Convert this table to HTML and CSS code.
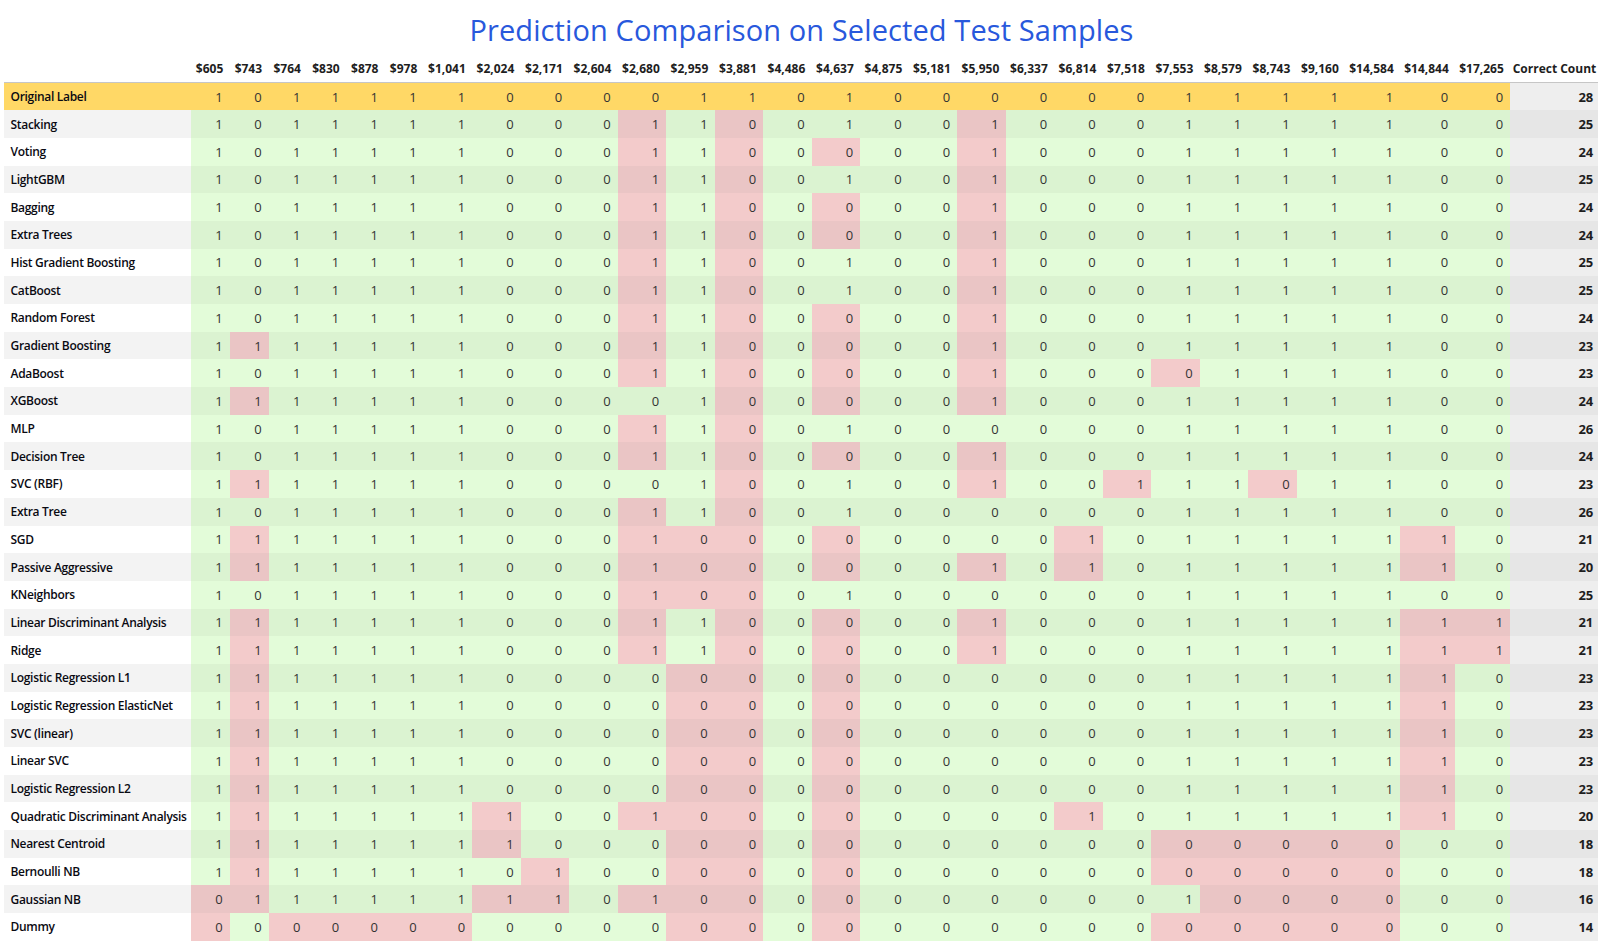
FILE: index.html
```html
<!DOCTYPE html>
<html lang="en">
<head>
<meta charset="utf-8">
<title>Prediction Comparison on Selected Test Samples</title>
<link rel="stylesheet" href="styles.css">
</head>
<body>
<div class="page">
<h1 class="title">Prediction Comparison on Selected Test Samples</h1>
<table class="grid">
<colgroup>
<col class="c-lbl">
<col class="c-s"><col class="c-s"><col class="c-s"><col class="c-s"><col class="c-s"><col class="c-s">
<col class="c-m"><col class="c-m"><col class="c-m"><col class="c-m"><col class="c-m"><col class="c-m"><col class="c-m"><col class="c-m"><col class="c-m"><col class="c-m"><col class="c-m"><col class="c-m"><col class="c-m"><col class="c-m"><col class="c-m"><col class="c-m"><col class="c-m"><col class="c-m"><col class="c-m">
<col class="c-l"><col class="c-l"><col class="c-l">
<col class="c-cnt">
</colgroup>
<thead>
<tr><th></th><th>$605</th><th>$743</th><th>$764</th><th>$830</th><th>$878</th><th>$978</th><th>$1,041</th><th>$2,024</th><th>$2,171</th><th>$2,604</th><th>$2,680</th><th>$2,959</th><th>$3,881</th><th>$4,486</th><th>$4,637</th><th>$4,875</th><th>$5,181</th><th>$5,950</th><th>$6,337</th><th>$6,814</th><th>$7,518</th><th>$7,553</th><th>$8,579</th><th>$8,743</th><th>$9,160</th><th>$14,584</th><th>$14,844</th><th>$17,265</th><th class="h-cnt">Correct Count</th></tr>
</thead>
<tbody>
<tr class="orig"><td class="lbl">Original Label</td><td>1</td><td>0</td><td>1</td><td>1</td><td>1</td><td>1</td><td>1</td><td>0</td><td>0</td><td>0</td><td>0</td><td>1</td><td>1</td><td>0</td><td>1</td><td>0</td><td>0</td><td>0</td><td>0</td><td>0</td><td>0</td><td>1</td><td>1</td><td>1</td><td>1</td><td>1</td><td>0</td><td>0</td><td class="cnt">28</td></tr>
<tr><td class="lbl">Stacking</td><td>1</td><td>0</td><td>1</td><td>1</td><td>1</td><td>1</td><td>1</td><td>0</td><td>0</td><td>0</td><td class="x">1</td><td>1</td><td class="x">0</td><td>0</td><td>1</td><td>0</td><td>0</td><td class="x">1</td><td>0</td><td>0</td><td>0</td><td>1</td><td>1</td><td>1</td><td>1</td><td>1</td><td>0</td><td>0</td><td class="cnt">25</td></tr>
<tr><td class="lbl">Voting</td><td>1</td><td>0</td><td>1</td><td>1</td><td>1</td><td>1</td><td>1</td><td>0</td><td>0</td><td>0</td><td class="x">1</td><td>1</td><td class="x">0</td><td>0</td><td class="x">0</td><td>0</td><td>0</td><td class="x">1</td><td>0</td><td>0</td><td>0</td><td>1</td><td>1</td><td>1</td><td>1</td><td>1</td><td>0</td><td>0</td><td class="cnt">24</td></tr>
<tr><td class="lbl">LightGBM</td><td>1</td><td>0</td><td>1</td><td>1</td><td>1</td><td>1</td><td>1</td><td>0</td><td>0</td><td>0</td><td class="x">1</td><td>1</td><td class="x">0</td><td>0</td><td>1</td><td>0</td><td>0</td><td class="x">1</td><td>0</td><td>0</td><td>0</td><td>1</td><td>1</td><td>1</td><td>1</td><td>1</td><td>0</td><td>0</td><td class="cnt">25</td></tr>
<tr><td class="lbl">Bagging</td><td>1</td><td>0</td><td>1</td><td>1</td><td>1</td><td>1</td><td>1</td><td>0</td><td>0</td><td>0</td><td class="x">1</td><td>1</td><td class="x">0</td><td>0</td><td class="x">0</td><td>0</td><td>0</td><td class="x">1</td><td>0</td><td>0</td><td>0</td><td>1</td><td>1</td><td>1</td><td>1</td><td>1</td><td>0</td><td>0</td><td class="cnt">24</td></tr>
<tr><td class="lbl">Extra Trees</td><td>1</td><td>0</td><td>1</td><td>1</td><td>1</td><td>1</td><td>1</td><td>0</td><td>0</td><td>0</td><td class="x">1</td><td>1</td><td class="x">0</td><td>0</td><td class="x">0</td><td>0</td><td>0</td><td class="x">1</td><td>0</td><td>0</td><td>0</td><td>1</td><td>1</td><td>1</td><td>1</td><td>1</td><td>0</td><td>0</td><td class="cnt">24</td></tr>
<tr><td class="lbl">Hist Gradient Boosting</td><td>1</td><td>0</td><td>1</td><td>1</td><td>1</td><td>1</td><td>1</td><td>0</td><td>0</td><td>0</td><td class="x">1</td><td>1</td><td class="x">0</td><td>0</td><td>1</td><td>0</td><td>0</td><td class="x">1</td><td>0</td><td>0</td><td>0</td><td>1</td><td>1</td><td>1</td><td>1</td><td>1</td><td>0</td><td>0</td><td class="cnt">25</td></tr>
<tr><td class="lbl">CatBoost</td><td>1</td><td>0</td><td>1</td><td>1</td><td>1</td><td>1</td><td>1</td><td>0</td><td>0</td><td>0</td><td class="x">1</td><td>1</td><td class="x">0</td><td>0</td><td>1</td><td>0</td><td>0</td><td class="x">1</td><td>0</td><td>0</td><td>0</td><td>1</td><td>1</td><td>1</td><td>1</td><td>1</td><td>0</td><td>0</td><td class="cnt">25</td></tr>
<tr><td class="lbl">Random Forest</td><td>1</td><td>0</td><td>1</td><td>1</td><td>1</td><td>1</td><td>1</td><td>0</td><td>0</td><td>0</td><td class="x">1</td><td>1</td><td class="x">0</td><td>0</td><td class="x">0</td><td>0</td><td>0</td><td class="x">1</td><td>0</td><td>0</td><td>0</td><td>1</td><td>1</td><td>1</td><td>1</td><td>1</td><td>0</td><td>0</td><td class="cnt">24</td></tr>
<tr><td class="lbl">Gradient Boosting</td><td>1</td><td class="x">1</td><td>1</td><td>1</td><td>1</td><td>1</td><td>1</td><td>0</td><td>0</td><td>0</td><td class="x">1</td><td>1</td><td class="x">0</td><td>0</td><td class="x">0</td><td>0</td><td>0</td><td class="x">1</td><td>0</td><td>0</td><td>0</td><td>1</td><td>1</td><td>1</td><td>1</td><td>1</td><td>0</td><td>0</td><td class="cnt">23</td></tr>
<tr><td class="lbl">AdaBoost</td><td>1</td><td>0</td><td>1</td><td>1</td><td>1</td><td>1</td><td>1</td><td>0</td><td>0</td><td>0</td><td class="x">1</td><td>1</td><td class="x">0</td><td>0</td><td class="x">0</td><td>0</td><td>0</td><td class="x">1</td><td>0</td><td>0</td><td>0</td><td class="x">0</td><td>1</td><td>1</td><td>1</td><td>1</td><td>0</td><td>0</td><td class="cnt">23</td></tr>
<tr><td class="lbl">XGBoost</td><td>1</td><td class="x">1</td><td>1</td><td>1</td><td>1</td><td>1</td><td>1</td><td>0</td><td>0</td><td>0</td><td>0</td><td>1</td><td class="x">0</td><td>0</td><td class="x">0</td><td>0</td><td>0</td><td class="x">1</td><td>0</td><td>0</td><td>0</td><td>1</td><td>1</td><td>1</td><td>1</td><td>1</td><td>0</td><td>0</td><td class="cnt">24</td></tr>
<tr><td class="lbl">MLP</td><td>1</td><td>0</td><td>1</td><td>1</td><td>1</td><td>1</td><td>1</td><td>0</td><td>0</td><td>0</td><td class="x">1</td><td>1</td><td class="x">0</td><td>0</td><td>1</td><td>0</td><td>0</td><td>0</td><td>0</td><td>0</td><td>0</td><td>1</td><td>1</td><td>1</td><td>1</td><td>1</td><td>0</td><td>0</td><td class="cnt">26</td></tr>
<tr><td class="lbl">Decision Tree</td><td>1</td><td>0</td><td>1</td><td>1</td><td>1</td><td>1</td><td>1</td><td>0</td><td>0</td><td>0</td><td class="x">1</td><td>1</td><td class="x">0</td><td>0</td><td class="x">0</td><td>0</td><td>0</td><td class="x">1</td><td>0</td><td>0</td><td>0</td><td>1</td><td>1</td><td>1</td><td>1</td><td>1</td><td>0</td><td>0</td><td class="cnt">24</td></tr>
<tr><td class="lbl">SVC (RBF)</td><td>1</td><td class="x">1</td><td>1</td><td>1</td><td>1</td><td>1</td><td>1</td><td>0</td><td>0</td><td>0</td><td>0</td><td>1</td><td class="x">0</td><td>0</td><td>1</td><td>0</td><td>0</td><td class="x">1</td><td>0</td><td>0</td><td class="x">1</td><td>1</td><td>1</td><td class="x">0</td><td>1</td><td>1</td><td>0</td><td>0</td><td class="cnt">23</td></tr>
<tr><td class="lbl">Extra Tree</td><td>1</td><td>0</td><td>1</td><td>1</td><td>1</td><td>1</td><td>1</td><td>0</td><td>0</td><td>0</td><td class="x">1</td><td>1</td><td class="x">0</td><td>0</td><td>1</td><td>0</td><td>0</td><td>0</td><td>0</td><td>0</td><td>0</td><td>1</td><td>1</td><td>1</td><td>1</td><td>1</td><td>0</td><td>0</td><td class="cnt">26</td></tr>
<tr><td class="lbl">SGD</td><td>1</td><td class="x">1</td><td>1</td><td>1</td><td>1</td><td>1</td><td>1</td><td>0</td><td>0</td><td>0</td><td class="x">1</td><td class="x">0</td><td class="x">0</td><td>0</td><td class="x">0</td><td>0</td><td>0</td><td>0</td><td>0</td><td class="x">1</td><td>0</td><td>1</td><td>1</td><td>1</td><td>1</td><td>1</td><td class="x">1</td><td>0</td><td class="cnt">21</td></tr>
<tr><td class="lbl">Passive Aggressive</td><td>1</td><td class="x">1</td><td>1</td><td>1</td><td>1</td><td>1</td><td>1</td><td>0</td><td>0</td><td>0</td><td class="x">1</td><td class="x">0</td><td class="x">0</td><td>0</td><td class="x">0</td><td>0</td><td>0</td><td class="x">1</td><td>0</td><td class="x">1</td><td>0</td><td>1</td><td>1</td><td>1</td><td>1</td><td>1</td><td class="x">1</td><td>0</td><td class="cnt">20</td></tr>
<tr><td class="lbl">KNeighbors</td><td>1</td><td>0</td><td>1</td><td>1</td><td>1</td><td>1</td><td>1</td><td>0</td><td>0</td><td>0</td><td class="x">1</td><td class="x">0</td><td class="x">0</td><td>0</td><td>1</td><td>0</td><td>0</td><td>0</td><td>0</td><td>0</td><td>0</td><td>1</td><td>1</td><td>1</td><td>1</td><td>1</td><td>0</td><td>0</td><td class="cnt">25</td></tr>
<tr><td class="lbl">Linear Discriminant Analysis</td><td>1</td><td class="x">1</td><td>1</td><td>1</td><td>1</td><td>1</td><td>1</td><td>0</td><td>0</td><td>0</td><td class="x">1</td><td>1</td><td class="x">0</td><td>0</td><td class="x">0</td><td>0</td><td>0</td><td class="x">1</td><td>0</td><td>0</td><td>0</td><td>1</td><td>1</td><td>1</td><td>1</td><td>1</td><td class="x">1</td><td class="x">1</td><td class="cnt">21</td></tr>
<tr><td class="lbl">Ridge</td><td>1</td><td class="x">1</td><td>1</td><td>1</td><td>1</td><td>1</td><td>1</td><td>0</td><td>0</td><td>0</td><td class="x">1</td><td>1</td><td class="x">0</td><td>0</td><td class="x">0</td><td>0</td><td>0</td><td class="x">1</td><td>0</td><td>0</td><td>0</td><td>1</td><td>1</td><td>1</td><td>1</td><td>1</td><td class="x">1</td><td class="x">1</td><td class="cnt">21</td></tr>
<tr><td class="lbl">Logistic Regression L1</td><td>1</td><td class="x">1</td><td>1</td><td>1</td><td>1</td><td>1</td><td>1</td><td>0</td><td>0</td><td>0</td><td>0</td><td class="x">0</td><td class="x">0</td><td>0</td><td class="x">0</td><td>0</td><td>0</td><td>0</td><td>0</td><td>0</td><td>0</td><td>1</td><td>1</td><td>1</td><td>1</td><td>1</td><td class="x">1</td><td>0</td><td class="cnt">23</td></tr>
<tr><td class="lbl">Logistic Regression ElasticNet</td><td>1</td><td class="x">1</td><td>1</td><td>1</td><td>1</td><td>1</td><td>1</td><td>0</td><td>0</td><td>0</td><td>0</td><td class="x">0</td><td class="x">0</td><td>0</td><td class="x">0</td><td>0</td><td>0</td><td>0</td><td>0</td><td>0</td><td>0</td><td>1</td><td>1</td><td>1</td><td>1</td><td>1</td><td class="x">1</td><td>0</td><td class="cnt">23</td></tr>
<tr><td class="lbl">SVC (linear)</td><td>1</td><td class="x">1</td><td>1</td><td>1</td><td>1</td><td>1</td><td>1</td><td>0</td><td>0</td><td>0</td><td>0</td><td class="x">0</td><td class="x">0</td><td>0</td><td class="x">0</td><td>0</td><td>0</td><td>0</td><td>0</td><td>0</td><td>0</td><td>1</td><td>1</td><td>1</td><td>1</td><td>1</td><td class="x">1</td><td>0</td><td class="cnt">23</td></tr>
<tr><td class="lbl">Linear SVC</td><td>1</td><td class="x">1</td><td>1</td><td>1</td><td>1</td><td>1</td><td>1</td><td>0</td><td>0</td><td>0</td><td>0</td><td class="x">0</td><td class="x">0</td><td>0</td><td class="x">0</td><td>0</td><td>0</td><td>0</td><td>0</td><td>0</td><td>0</td><td>1</td><td>1</td><td>1</td><td>1</td><td>1</td><td class="x">1</td><td>0</td><td class="cnt">23</td></tr>
<tr><td class="lbl">Logistic Regression L2</td><td>1</td><td class="x">1</td><td>1</td><td>1</td><td>1</td><td>1</td><td>1</td><td>0</td><td>0</td><td>0</td><td>0</td><td class="x">0</td><td class="x">0</td><td>0</td><td class="x">0</td><td>0</td><td>0</td><td>0</td><td>0</td><td>0</td><td>0</td><td>1</td><td>1</td><td>1</td><td>1</td><td>1</td><td class="x">1</td><td>0</td><td class="cnt">23</td></tr>
<tr><td class="lbl">Quadratic Discriminant Analysis</td><td>1</td><td class="x">1</td><td>1</td><td>1</td><td>1</td><td>1</td><td>1</td><td class="x">1</td><td>0</td><td>0</td><td class="x">1</td><td class="x">0</td><td class="x">0</td><td>0</td><td class="x">0</td><td>0</td><td>0</td><td>0</td><td>0</td><td class="x">1</td><td>0</td><td>1</td><td>1</td><td>1</td><td>1</td><td>1</td><td class="x">1</td><td>0</td><td class="cnt">20</td></tr>
<tr><td class="lbl">Nearest Centroid</td><td>1</td><td class="x">1</td><td>1</td><td>1</td><td>1</td><td>1</td><td>1</td><td class="x">1</td><td>0</td><td>0</td><td>0</td><td class="x">0</td><td class="x">0</td><td>0</td><td class="x">0</td><td>0</td><td>0</td><td>0</td><td>0</td><td>0</td><td>0</td><td class="x">0</td><td class="x">0</td><td class="x">0</td><td class="x">0</td><td class="x">0</td><td>0</td><td>0</td><td class="cnt">18</td></tr>
<tr><td class="lbl">Bernoulli NB</td><td>1</td><td class="x">1</td><td>1</td><td>1</td><td>1</td><td>1</td><td>1</td><td>0</td><td class="x">1</td><td>0</td><td>0</td><td class="x">0</td><td class="x">0</td><td>0</td><td class="x">0</td><td>0</td><td>0</td><td>0</td><td>0</td><td>0</td><td>0</td><td class="x">0</td><td class="x">0</td><td class="x">0</td><td class="x">0</td><td class="x">0</td><td>0</td><td>0</td><td class="cnt">18</td></tr>
<tr><td class="lbl">Gaussian NB</td><td class="x">0</td><td class="x">1</td><td>1</td><td>1</td><td>1</td><td>1</td><td>1</td><td class="x">1</td><td class="x">1</td><td>0</td><td class="x">1</td><td class="x">0</td><td class="x">0</td><td>0</td><td class="x">0</td><td>0</td><td>0</td><td>0</td><td>0</td><td>0</td><td>0</td><td>1</td><td class="x">0</td><td class="x">0</td><td class="x">0</td><td class="x">0</td><td>0</td><td>0</td><td class="cnt">16</td></tr>
<tr><td class="lbl">Dummy</td><td class="x">0</td><td>0</td><td class="x">0</td><td class="x">0</td><td class="x">0</td><td class="x">0</td><td class="x">0</td><td>0</td><td>0</td><td>0</td><td>0</td><td class="x">0</td><td class="x">0</td><td>0</td><td class="x">0</td><td>0</td><td>0</td><td>0</td><td>0</td><td>0</td><td>0</td><td class="x">0</td><td class="x">0</td><td class="x">0</td><td class="x">0</td><td class="x">0</td><td>0</td><td>0</td><td class="cnt">14</td></tr>
</tbody>
</table>
</div>
</body>
</html>
```

FILE: styles.css
```css
html, body {
  margin: 0;
  padding: 0;
  background: #ffffff;
}

body {
  font-family: "Open Sans", "Noto Sans", "DejaVu Sans", sans-serif;
  color: #222;
}

.page {
  padding: 0 4px;
}

.title {
  margin: 11px 0 6px;
  font-size: 29px;
  line-height: 38px;
  font-weight: 500;
  letter-spacing: 0.1px;
  text-align: center;
  color: #2858dc;
  white-space: nowrap;
}

.grid {
  border-collapse: collapse;
  border-spacing: 0;
  table-layout: fixed;
  width: 1594px;
}

.c-lbl { width: 187px; }
.c-s { width: 38.8px; }
.c-m { width: 48.5px; }
.c-l { width: 55px; }
.c-cnt { width: 88px; }

.grid thead th {
  height: 27px;
  padding: 0 6.5px 0 0;
  font-size: 12px;
  font-weight: 700;
  text-align: right;
  vertical-align: middle;
  white-space: nowrap;
  color: #1e1e1e;
  border-bottom: 1px solid #c6c6c6;
}

.grid thead th.h-cnt {
  padding-right: 2px;
  overflow: visible;
}

.grid tbody tr {
  height: 27.7px;
}

.grid td {
  padding: 0 7px 0 0;
  text-align: right;
  vertical-align: middle;
  font-size: 13px;
  color: #333;
  white-space: nowrap;
  background: #e3fcd9;
}

.grid td.x {
  background: #f3cbcb;
}

.grid td.lbl {
  padding: 0 0 0 6.5px;
  text-align: left;
  font-size: 12px;
  letter-spacing: -0.3px;
  font-weight: 600;
  color: #0a0a12;
  background: #ffffff;
}

.grid td.cnt {
  padding-right: 5px;
  font-weight: 700;
  color: #1e1e1e;
  background: #eeeeee;
}

.grid tbody tr:nth-child(even) td { background: #dbf3d1; }
.grid tbody tr:nth-child(even) td.x { background: #eac5c5; }
.grid tbody tr:nth-child(even) td.lbl { background: #f3f3f3; }
.grid tbody tr:nth-child(even) td.cnt { background: #e6e6e6; }

.grid tbody tr.orig td,
.grid tbody tr.orig td.lbl {
  background: #ffd866;
}

.grid tbody tr.orig td.cnt {
  background: #eeeeee;
}
```
